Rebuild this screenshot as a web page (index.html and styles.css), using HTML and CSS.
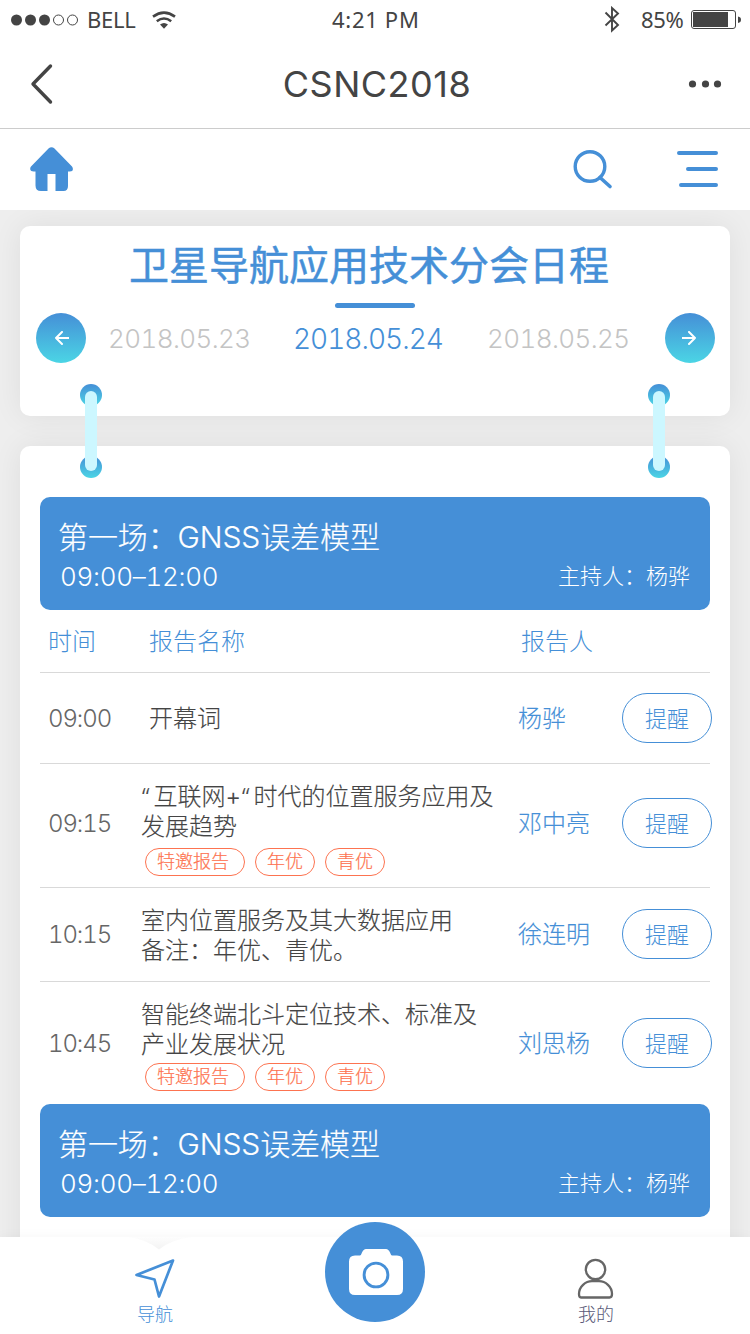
FILE: index.html
```
<!DOCTYPE html>
<html lang="zh-CN">
<head>
  <meta charset="UTF-8" />
  <meta name="viewport" content="width=device-width, initial-scale=1.0"/>
  <title>CSNC2018</title>
  <link rel="stylesheet" href="styles.css">
</head>
<body>
  <div class="status-bar">
    <svg class="signal" width="68" height="12" viewBox="0 0 68 12">
      <g fill="#444"><circle cx="5.5" cy="6" r="5.5"/><circle cx="19.5" cy="6" r="5.5"/><circle cx="33.5" cy="6" r="5.5"/></g>
      <g fill="none" stroke="#444"><circle cx="47.5" cy="6" r="5"/><circle cx="61.5" cy="6" r="5"/></g>
    </svg>
    <span class="carrier">BELL</span>
    <svg class="wifi" width="24" height="18" viewBox="0 0 24 18">
      <g fill="none" stroke="#444" stroke-width="2.6">
        <path d="M1 5.6Q12 -2.400 23 5.600"/>
        <path d="M4.800 10.200Q12 4.800 19.200 10.200"/>
      </g>
      <path fill="#444" d="M8 13.600Q12 10.600 16 13.600L12 17.800Z"/>
    </svg>
    <span class="clock">4:21 PM</span>
    <svg class="bluetooth" width="16" height="27" viewBox="0 0 16 27">
      <path d="M1.500 6.500L14 19L8 24.500V2L14 7.500L1.500 19.500" fill="none" stroke="#444" stroke-width="1.900"/>
    </svg>
    <span class="percent">85%</span>
    <svg class="battery" width="51" height="20" viewBox="0 0 51 20">
      <rect x=".5" y=".5" width="44" height="18" rx="2.500" fill="none" stroke="#444"/>
      <rect x="2" y="2" width="35" height="15" fill="#444"/>
      <path d="M47 6.500Q50 7 50 9.700T47 13Z" fill="#444"/>
    </svg>
  </div>

  <header class="nav-bar">
    <svg width="24" height="42" viewBox="0 0 24 42">
      <path d="M20.500 3L3 21L20.500 39" fill="none" stroke="#444" stroke-width="3.400" stroke-linecap="round" stroke-linejoin="round"/>
    </svg>
    <h1>CSNC2018</h1>
    <svg width="34" height="8" viewBox="0 0 34 8" fill="#444">
      <circle cx="4.500" cy="4" r="3.600"/><circle cx="17.500" cy="4" r="3.600"/><circle cx="29.500" cy="4" r="3.600"/>
    </svg>
  </header>

  <div class="toolbar">
    <svg class="home" width="44" height="46" viewBox="0 0 44 46" fill="#458fd7">
      <path d="M18.500 1.500Q21.500 -1 24.500 1.500L42 19.500Q43.500 21.500 42.500 23.500Q42 24.500 38 24.500V39Q38 44 33.500 44H25.500V27H17.500V44H11Q5.500 44 5.500 38.500V24.500Q1.500 24.500 .8 23.500Q-.500 21.500 1 19.500Z"/>
    </svg>
    <svg class="search" width="40" height="40" viewBox="0 0 40 40" fill="none" stroke="#458fd7">
      <circle cx="17" cy="16.500" r="14.800" stroke-width="3.400"/>
      <path d="M27 27.500L37 36.500" stroke-width="3.600" stroke-linecap="round"/>
    </svg>
    <svg class="menu" width="42" height="38" viewBox="0 0 42 38" stroke="#458fd7" stroke-width="4" stroke-linecap="round">
      <path d="M3 3H40M12 19H40M5 35H40"/>
    </svg>
  </div>

  <main>
    <section class="card schedule">
      <h2>卫星导航应用技术分会日程</h2>
      <div class="underline"></div>
      <div class="dates">
        <button class="arrow">
          <svg width="16" height="14" viewBox="0 0 16 14"><path d="M16 7H3M9 1L3 7L9 13"/></svg>
        </button>
        <span class="date">2018.05.23</span>
        <span class="date active">2018.05.24</span>
        <span class="date">2018.05.25</span>
        <button class="arrow">
          <svg width="16" height="14" viewBox="0 0 16 14"><path d="M0 7H13M7 1L13 7L7 13"/></svg>
        </button>
      </div>
      <div class="ring ring-left"><i></i><i></i></div>
      <div class="ring ring-right"><i></i><i></i></div>
    </section>

    <section class="card sessions">
      <div class="banner">
        <h3>第一场：GNSS误差模型</h3>
        <div class="banner-info">
          <span class="hours">09:00–12:00</span>
          <span class="host">主持人：杨骅</span>
        </div>
      </div>

      <div class="row head">
        <span>时间</span>
        <span class="head-name">报告名称</span>
        <span class="head-speaker">报告人</span>
      </div>

      <div class="row opening">
        <span class="time">09:00</span>
        <div class="talk">开幕词</div>
        <span class="speaker">杨骅</span>
        <button class="remind">提醒</button>
      </div>

      <div class="row tagged">
        <span class="time">09:15</span>
        <div class="talk"><span class="quote">“</span>互联网+<span class="quote">“</span>时代的位置服务应用及<br>发展趋势
          <div class="tags"><span class="tag wide">特邀报告</span><span class="tag">年优</span><span class="tag">青优</span></div>
        </div>
        <span class="speaker">邓中亮</span>
        <button class="remind">提醒</button>
      </div>

      <div class="row plain">
        <span class="time">10:15</span>
        <div class="talk">室内位置服务及其大数据应用<br>备注：年优、青优。</div>
        <span class="speaker">徐连明</span>
        <button class="remind">提醒</button>
      </div>

      <div class="row tagged last">
        <span class="time">10:45</span>
        <div class="talk">智能终端北斗定位技术、标准及<br>产业发展状况
          <div class="tags"><span class="tag wide">特邀报告</span><span class="tag">年优</span><span class="tag">青优</span></div>
        </div>
        <span class="speaker">刘思杨</span>
        <button class="remind">提醒</button>
      </div>

      <div class="banner">
        <h3>第一场：GNSS误差模型</h3>
        <div class="banner-info">
          <span class="hours">09:00–12:00</span>
          <span class="host">主持人：杨骅</span>
        </div>
      </div>
    </section>
  </main>

  <footer class="tab-bar">
    <svg class="notch" width="76" height="14" viewBox="0 0 76 14">
      <defs>
        <linearGradient id="dip" x1="0" y1="0" x2="0" y2="1">
          <stop offset="0" stop-color="#fdfdfd"/>
          <stop offset="1" stop-color="#f3f3f3"/>
        </linearGradient>
      </defs>
      <path d="M8 0Q26 2 39 12.500Q52 2 72 0Z" fill="url(#dip)"/>
    </svg>
    <a class="tab active">
      <svg width="42" height="42" viewBox="0 0 42 42">
        <path d="M39 2.500L2.500 17L20.500 21.500L25 38.500Z" fill="none" stroke="#458fd7" stroke-width="2.700" stroke-linejoin="round"/>
      </svg>
      导航
    </a>
    <a class="camera">
      <svg width="54" height="46" viewBox="0 0 54 46">
        <path fill="#fff" d="M6 6.500H11Q12 6.500 13 3.500Q14.500 0 17 0H37Q39.500 0 41 3.500Q42 6.500 43 6.500H48Q54 6.500 54 12.500V40Q54 46 48 46H6Q0 46 0 40V12.500Q0 6.500 6 6.500Z"/>
        <circle cx="27" cy="26" r="11.900" fill="none" stroke="#458fd7" stroke-width="2.900"/>
      </svg>
    </a>
    <a class="tab profile">
      <svg width="42" height="42" viewBox="0 0 42 42" fill="none" stroke="#666" stroke-width="2.300">
        <circle cx="20.500" cy="11.500" r="9.700"/>
        <path d="M6 39.500H34.500Q37 39.500 37 36C37 28.500 30.500 23.200 24 23.200H17C10.500 23.200 4 28.500 4 36Q4 39.500 6 39.500Z"/>
      </svg>
      我的
    </a>
  </footer>
</body>
</html>
```
FILE: styles.css
```
* {
  box-sizing: border-box;
}
body {
  margin: 0;
  height: 1334px;
  overflow: hidden;
  display: flex;
  flex-direction: column;
  background: #fff;
  color: #444;
  font-family: Inter, "Noto Sans CJK SC", sans-serif;
  font-weight: 300;
  font-feature-settings: "calt" 0, "tnum" 1;
}
h1, h2, h3 {
  margin: 0;
}
button {
  padding: 0;
  border: none;
  background: none;
  font: inherit;
  cursor: pointer;
}
svg {
  display: block;
  flex: none;
}

/* status bar */
.status-bar {
  height: 39px;
  padding: 0 10px 0 11px;
  display: grid;
  grid-template-columns: 76px 65px 180px 272px 37px 50px 1fr;
  align-items: center;
  font-family: "Noto Sans", sans-serif;
  font-size: 22px;
  line-height: 28px;
  font-weight: 400;
}
.status-bar span {
  padding-bottom: 2px;
}
.status-bar .clock {
  letter-spacing: 0.7px;
}
.carrier, .percent {
  letter-spacing: -0.3px;
}

/* navigation */
.nav-bar {
  height: 90px;
  padding: 1px 28px 0 30px;
  display: flex;
  align-items: center;
  justify-content: space-between;
  border-bottom: 1px solid #ccc;
}
.nav-bar h1 {
  padding-left: 12px;
  font-size: 36px;
  font-weight: 400;
  font-feature-settings: "tnum" 0;
  letter-spacing: 0.5px;
}
.toolbar {
  height: 81px;
  padding: 0 32px 2px 30px;
  display: flex;
  align-items: center;
}
.home {
  margin-top: 2px;
}
.search {
  margin: 2px 63px 0 auto;
}

/* content */
main {
  flex: 1;
  min-height: 0;
  padding: 16px 20px 0;
  overflow: hidden;
  background: #eee;
}
.card {
  background: #fff;
  border-radius: 10px;
  box-shadow: 0 0 30px rgba(0, 0, 0, 0.07);
}
.schedule {
  position: relative;
  height: 190px;
}
.schedule h2 {
  height: 77px;
  padding: 2px 12px 0 0;
  font-size: 40px;
  line-height: 76px;
  font-weight: 400;
  -webkit-text-stroke: 0.5px #458fd7;
  text-align: center;
  color: #458fd7;
}
.underline {
  width: 80px;
  height: 5px;
  margin: 0 auto;
  border-radius: 3px;
  background: #458fd7;
}
.dates {
  height: 50px;
  margin-top: 5px;
  padding: 0 15px 0 16px;
  display: grid;
  grid-template-columns: 72px 185px 194px 1fr 50px;
  align-items: center;
}
.date {
  padding-top: 1px;
  font-size: 26px;
  letter-spacing: -0.6px;
  color: #c4c4c4;
}
.date.active {
  font-size: 28px;
  letter-spacing: -1px;
  color: #458fd7;
}
.arrow {
  width: 50px;
  height: 50px;
  display: flex;
  align-items: center;
  justify-content: center;
  border-radius: 50%;
  background: linear-gradient(#458fd7, #4bd5e5);
}
.arrow path {
  fill: none;
  stroke: #fff;
  stroke-width: 2;
  stroke-linecap: round;
  stroke-linejoin: round;
}

/* binder rings that join the two cards */
.ring {
  position: absolute;
  z-index: 1;
  top: 158px;
  width: 22px;
  height: 94px;
  display: flex;
  flex-direction: column;
  justify-content: space-between;
}
.ring-left {
  left: 60px;
}
.ring-right {
  right: 60px;
}
.ring i {
  height: 22px;
  border-radius: 50%;
  background: linear-gradient(#458fd7, #4bd5e5);
}
.ring::after {
  content: "";
  position: absolute;
  top: 7px;
  left: 5px;
  width: 12px;
  height: 80px;
  border-radius: 6px;
  background: #ccf7ff;
}
.sessions {
  height: 900px;
  margin-top: 30px;
  padding: 51px 20px 0;
}
.banner {
  height: 113px;
  padding: 20px 20px 0 18px;
  border-radius: 10px;
  background: #458fd7;
  color: #fff;
}
.banner h3 {
  font-size: 30px;
  line-height: 40px;
  font-weight: 300;
  letter-spacing: -0.1px;
  -webkit-text-stroke: 0.2px #fff;
}
.banner-info {
  height: 40px;
  padding-left: 2px;
  display: flex;
  align-items: center;
  justify-content: space-between;
}
.hours {
  padding-bottom: 1px;
  font-size: 26px;
  letter-spacing: -0.3px;
}
.host {
  padding-bottom: 6px;
  font-size: 22px;
}

/* report table */
.row {
  display: grid;
  grid-template-columns: 101px 377px 104px 90px;
  align-items: center;
  width: 672px;
  padding-bottom: 1px;
  background: linear-gradient(#d9d9d9, #d9d9d9) 0 100% / 670px 1px no-repeat;
  font-size: 24px;
  line-height: 30px;
}
.head {
  height: 63px;
  padding: 1px 0 0 8px;
  color: #458fd7;
}
.head-speaker {
  margin-left: -5px;
}
.opening {
  height: 91px;
}
.opening .talk {
  padding: 2px 0 0 8px;
}
.tagged {
  height: 124px;
  padding-bottom: 6px;
}
.tagged .talk {
  margin-top: 10px;
}
.plain {
  height: 94px;
  padding-bottom: 2px;
}
.plain .talk {
  margin-top: 3px;
}
.row.last {
  height: 122px;
  padding: 0;
  background: none;
}
.last .talk {
  margin-top: 4px;
}
.time {
  padding: 1px 0 0 8px;
  font-size: 24px;
  letter-spacing: -1.1px;
  color: #666;
}
.talk {
  white-space: nowrap;
  -webkit-text-stroke: 0.15px #444;
}
.quote {
  display: inline-block;
  width: 12.5px;
  padding-left: 1px;
  font-family: "Noto Sans", sans-serif;
}
.speaker {
  padding-top: 2px;
  color: #458fd7;
  -webkit-text-stroke: 0.15px #458fd7;
}
.remind {
  height: 50px;
  padding-top: 1px;
  border: 1px solid #458fd7;
  border-radius: 25px;
  font-size: 22px;
  line-height: 46px;
  color: #458fd7;
}
.tags {
  display: flex;
  gap: 10px;
  padding: 6px 0 0 4px;
}
.last .tags {
  padding-top: 3px;
}
.tag {
  width: 60px;
  height: 28px;
  border: 1px solid #fd7350;
  border-radius: 14px;
  font-size: 18px;
  line-height: 26px;
  text-align: center;
  color: #fd7350;
  -webkit-text-stroke: 0.2px #fd7350;
}
.tag.wide {
  width: 100px;
  padding-right: 4px;
}

/* bottom tabs */
.tab-bar {
  position: relative;
  z-index: 2;
  height: 97px;
  padding: 0 124px;
  display: flex;
  justify-content: space-between;
  background: #fff;
  box-shadow: 0 0 12px rgba(0, 0, 0, 0.04);
}
.notch {
  position: absolute;
  top: 0;
  left: 120px;
}
.tab {
  width: 62px;
  padding-top: 21px;
  display: flex;
  flex-direction: column;
  align-items: center;
  font-size: 18px;
  line-height: 30px;
  color: #5a5a78;
}
.tab.active {
  color: #458fd7;
}
.tab.profile {
  margin-right: -1px;
}
.camera {
  width: 100px;
  height: 100px;
  margin: -15px 1px 0 0;
  padding-left: 2px;
  display: flex;
  align-items: center;
  justify-content: center;
  border-radius: 50%;
  background: #458fd7;
}
```
